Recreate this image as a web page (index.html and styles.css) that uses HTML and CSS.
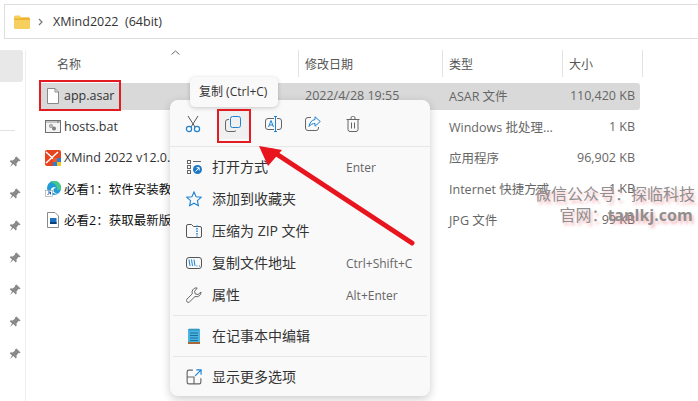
FILE: index.html
```html
<!DOCTYPE html>
<html lang="en">
<head>
    <meta charset="UTF-8">
    <title>XMind2022</title>
    <link rel="stylesheet" href="styles.css">
</head>
<body>
    <div class="window">
        <div class="address-bar">
            <svg class="folder-icon" width="16" height="14" viewBox="0 0 16 14">
                <path d="M0 2a1.500 1.500 0 0 1 1.500-1.500h4l2 2h7A1.500 1.500 0 0 1 16 4v8.500a1.500 1.500 0 0 1-1.500 1.500h-13A1.500 1.500 0 0 1 0 12.500z" fill="#f7cf5f"/>
                <path d="M0 3.500h6l2-1h6.500A1.500 1.500 0 0 1 16 4v1H0z" fill="#eeb32f"/>
            </svg>
            <svg class="crumb-arrow" width="5" height="8" viewBox="0 0 5 8"><path d="M1 1l3 3-3 3" fill="none" stroke="#777" stroke-width="1.200"/></svg>
            <span class="crumb">XMind2022 &nbsp;(64bit)</span>
        </div>

        <div class="main">
            <aside class="sidebar">
                <div class="side-selected"></div>
                <div class="side-divider"></div>
                <div class="pins">
                    <svg class="pin" viewBox="0 0 12 12"><path d="M7.500 0.500l4 4-1 .8-1-.2-2 2.400.2 2-1 1-2.300-2.500L1 11l2-3.500L.7 5.300l1-1 2 .2 2.400-2-.2-1z"/></svg>
                    <svg class="pin" viewBox="0 0 12 12"><path d="M7.500 0.500l4 4-1 .8-1-.2-2 2.400.2 2-1 1-2.300-2.500L1 11l2-3.500L.7 5.300l1-1 2 .2 2.400-2-.2-1z"/></svg>
                    <svg class="pin" viewBox="0 0 12 12"><path d="M7.500 0.500l4 4-1 .8-1-.2-2 2.400.2 2-1 1-2.300-2.500L1 11l2-3.500L.7 5.300l1-1 2 .2 2.400-2-.2-1z"/></svg>
                    <svg class="pin" viewBox="0 0 12 12"><path d="M7.500 0.500l4 4-1 .8-1-.2-2 2.400.2 2-1 1-2.300-2.500L1 11l2-3.500L.7 5.300l1-1 2 .2 2.400-2-.2-1z"/></svg>
                    <svg class="pin" viewBox="0 0 12 12"><path d="M7.500 0.500l4 4-1 .8-1-.2-2 2.400.2 2-1 1-2.300-2.500L1 11l2-3.500L.7 5.300l1-1 2 .2 2.400-2-.2-1z"/></svg>
                    <svg class="pin" viewBox="0 0 12 12"><path d="M7.500 0.500l4 4-1 .8-1-.2-2 2.400.2 2-1 1-2.300-2.500L1 11l2-3.500L.7 5.300l1-1 2 .2 2.400-2-.2-1z"/></svg>
                    <svg class="pin" viewBox="0 0 12 12"><path d="M7.500 0.500l4 4-1 .8-1-.2-2 2.400.2 2-1 1-2.300-2.500L1 11l2-3.500L.7 5.300l1-1 2 .2 2.400-2-.2-1z"/></svg>
                </div>
            </aside>

            <div class="files">
                <div class="file-head">
                    <div class="col col-name">名称<svg class="sort" width="9" height="5" viewBox="0 0 9 5"><path d="M.5 4.500l4-3.500 4 3.500" fill="none" stroke="#666"/></svg></div>
                    <div class="col col-date">修改日期</div>
                    <div class="col col-type">类型</div>
                    <div class="col col-size">大小</div>
                </div>

                <div class="file-row selected">
                    <div class="cell-name">
                        <svg class="file-icon" width="12" height="16" viewBox="0 0 12 16"><path d="M.5.500h7.500l3.500 3.500v11.500H.5z" fill="#fff" stroke="#8a8a8a"/><path d="M8 .5v3.500h3.500" fill="none" stroke="#8a8a8a"/></svg>
                        <span>app.asar</span>
                    </div>
                    <div class="cell-date">2022/4/28 19:55</div>
                    <div class="cell-type">ASAR 文件</div>
                    <div class="cell-size">110,420 KB</div>
                </div>
                <div class="file-row">
                    <div class="cell-name">
                        <svg class="file-icon" width="16" height="13" viewBox="0 0 16 13"><rect x=".5" y=".5" width="15" height="12" fill="#f4f4f4" stroke="#6f6f6f"/><rect x="1" y="1" width="14" height="2" fill="#c4c4c4"/><circle cx="6" cy="6" r="2" fill="#9a9a9a"/><circle cx="9" cy="8.500" r="2" fill="#7f7f7f"/><circle cx="6" cy="6" r=".7" fill="#eee"/><circle cx="13" cy="2" r=".7" fill="#555"/></svg>
                        <span>hosts.bat</span>
                    </div>
                    <div class="cell-date">2022/4/28 19:55</div>
                    <div class="cell-type">Windows 批处理...</div>
                    <div class="cell-size">1 KB</div>
                </div>
                <div class="file-row">
                    <div class="cell-name">
                        <svg class="file-icon" width="16" height="16" viewBox="0 0 16 16"><rect width="16" height="16" rx="2" fill="#e8431f"/><path d="M1 2l12 11M13 2L1 13" stroke="#fff" stroke-width="1.500"/><rect x="8" y="8" width="4" height="4" fill="#f05a28"/><rect x="12" y="8" width="4" height="4" fill="#2b7fd6"/><rect x="8" y="12" width="4" height="4" fill="#2b7fd6"/><rect x="12" y="12" width="4" height="4" fill="#f5c518"/></svg>
                        <span>XMind 2022 v12.0.0</span>
                    </div>
                    <div class="cell-date">2022/4/28 19:55</div>
                    <div class="cell-type">应用程序</div>
                    <div class="cell-size">96,902 KB</div>
                </div>
                <div class="file-row">
                    <div class="cell-name">
                        <svg class="file-icon" width="16" height="16" viewBox="0 0 16 16"><circle cx="9" cy="7" r="7" fill="#1f9bd8"/><path d="M5 1a7 7 0 0 1 11 6v2h-4c1-3-2-7-7-8z" fill="#46c78c"/><path d="M6 8c1-2 4-2.500 5.500-1-2-.3-3.500 1-3 3 .4 1.700 2.500 2.500 4.500 2-2 1.500-7 .5-7-4z" fill="#fff"/><rect x=".5" y="9.500" width="7" height="6" fill="#fff" stroke="#999" stroke-width=".6"/><path d="M2.500 14l3-3M3 11h2.500v2.500" fill="none" stroke="#1a5fb4"/></svg>
                        <span class="dark">必看1：软件安装教程</span>
                    </div>
                    <div class="cell-date">2022/4/28 19:55</div>
                    <div class="cell-type">Internet 快捷方式</div>
                    <div class="cell-size">1 KB</div>
                </div>
                <div class="file-row">
                    <div class="cell-name">
                        <svg class="file-icon" width="12" height="16" viewBox="0 0 12 16"><path d="M.5.500h7.500l3.500 3.500v11.500H.5z" fill="#fff" stroke="#8a8a8a"/><rect x="3" y="6" width="6.500" height="6" fill="#1a6fc0"/><rect x="3" y="10" width="6.500" height="2" fill="#0d3f78"/></svg>
                        <span class="dark">必看2：获取最新版本</span>
                    </div>
                    <div class="cell-date">2022/4/28 19:55</div>
                    <div class="cell-type">JPG 文件</div>
                    <div class="cell-size">99 KB</div>
                </div>
            </div>
        </div>

        <div class="name-mark"></div>

        <div class="context-menu">
            <div class="toolbar">
                <div class="tool">
                    <svg width="16" height="18" viewBox="0 0 16 18" fill="none"><path d="M3 1l7 11M13 1L6 12" stroke="#555" stroke-width="1"/><circle cx="4" cy="14" r="2.600" stroke="#1e82d2" stroke-width="1.200"/><circle cx="12" cy="14" r="2.600" stroke="#1e82d2" stroke-width="1.200"/></svg>
                </div>
                <div class="tool active">
                    <svg width="16" height="16" viewBox="0 0 16 16" fill="none"><rect x="5.500" y=".5" width="10" height="11" rx="2" stroke="#1e82d2"/><path d="M4 3.500H3a2.500 2.500 0 0 0-2.500 2.500v7A2.500 2.500 0 0 0 3 15.500h6a2.500 2.500 0 0 0 2-1" stroke="#666"/></svg>
                </div>
                <div class="tool">
                    <svg width="17" height="16" viewBox="0 0 17 16" fill="none"><rect x=".5" y="2.500" width="16" height="11" rx="2.500" stroke="#666"/><rect x="9" y="1" width="3" height="14" fill="#f9f9f9"/><path d="M10.500 .5v15M9 .5h3M9 15.500h3" stroke="#1e82d2"/><path d="M3.500 11l2.500-6.500L8.500 11M4.300 9h3.500" stroke="#1e82d2"/></svg>
                </div>
                <div class="tool">
                    <svg width="16" height="15" viewBox="0 0 16 15" fill="none"><path d="M6 1.500H3A2.500 2.500 0 0 0 .5 4v8A2.500 2.500 0 0 0 3 14.500h8a2.500 2.500 0 0 0 2.500-2.500v-1" stroke="#666"/><path d="M10 .8l5.300 4.700L10 10.200V7.500C7.500 7.500 5.500 8.500 4 10.500 4.500 7 6.500 4 10 3.500z" stroke="#1e82d2"/></svg>
                </div>
                <div class="tool">
                    <svg width="14" height="16" viewBox="0 0 14 16" fill="none" stroke="#666"><path d="M.5 3.500h13M5 3.500V2a1.500 1.500 0 0 1 1.500-1.500h1A1.500 1.500 0 0 1 9 2v1.500M2 3.500v10A2 2 0 0 0 4 15.500h6a2 2 0 0 0 2-2v-10M5.500 6.500v6M8.500 6.500v6"/></svg>
                </div>
            </div>

            <div class="menu-list">
                <div class="menu-item">
                    <svg class="menu-icon" width="16" height="16" viewBox="0 0 16 16" fill="none"><rect x="1.500" y="1.500" width="3" height="3" stroke="#666"/><rect x="1.500" y="6.500" width="3" height="3" stroke="#666"/><rect x="1.500" y="11.500" width="3" height="3" stroke="#666"/><path d="M7 2.500h8" stroke="#666"/><circle cx="11.500" cy="10.500" r="4.500" fill="#1e78c8"/><path d="M9.500 12.500l3.500-3.500M10.500 8.700h2.700v2.700" stroke="#fff"/></svg>
                    <span class="menu-label">打开方式</span>
                    <span class="menu-key">Enter</span>
                </div>
                <div class="menu-item">
                    <svg class="menu-icon" width="16" height="16" viewBox="0 0 16 16" fill="none"><path d="M8 1l2.100 4.700 5.100.6-3.800 3.400 1 5L8 12.200l-4.400 2.500 1-5L.8 6.300l5.100-.6z" stroke="#1e82d2" stroke-width="1.100"/></svg>
                    <span class="menu-label">添加到收藏夹</span>
                </div>
                <div class="menu-item">
                    <svg class="menu-icon" width="16" height="14" viewBox="0 0 16 14" fill="none"><path d="M.5 2A1.500 1.500 0 0 1 2 .5h3.500l2 2H14A1.500 1.500 0 0 1 15.500 4v8a1.500 1.500 0 0 1-1.500 1.500H2A1.500 1.500 0 0 1 .5 12z" stroke="#555"/><path d="M11 1.500v11" stroke="#1e82d2" stroke-width="1.500" stroke-dasharray="1.500 1"/></svg>
                    <span class="menu-label">压缩为 ZIP 文件</span>
                </div>
                <div class="menu-item">
                    <svg class="menu-icon" width="16" height="12" viewBox="0 0 16 12" fill="none"><rect x=".5" y=".5" width="15" height="11" rx="2.500" stroke="#555"/><path d="M3 2.500l1 6.500M5.500 2.500l1 6.500M8 2.500l1 6.500" stroke="#1e82d2"/><path d="M10.500 9h1M13 9h1" stroke="#1e82d2"/></svg>
                    <span class="menu-label">复制文件地址</span>
                    <span class="menu-key">Ctrl+Shift+C</span>
                </div>
                <div class="menu-item">
                    <svg class="menu-icon" width="16" height="16" viewBox="0 0 16 16" fill="none"><path d="M10 .8a4.500 4.500 0 0 0-3.700 6L.9 12.200a1.800 1.800 0 0 0 2.700 2.600l5.400-5.300A4.500 4.500 0 0 0 15 5l-3 2.500-2.800-.6-.6-2.600L11.200 1A4.500 4.500 0 0 0 10 .8z" stroke="#666"/></svg>
                    <span class="menu-label">属性</span>
                    <span class="menu-key">Alt+Enter</span>
                </div>
            </div>
            <div class="menu-sep"></div>
            <div class="menu-item">
                <svg class="menu-icon" width="16" height="16" viewBox="0 0 16 16"><rect x="2" y="1" width="12" height="14" fill="#4ab3e0"/><rect x="2" y="14" width="12" height="2" fill="#a8673a"/><path d="M4 0.500v2M6 .5v2M8 .5v2M10 .5v2M12 .5v2" stroke="#1d7fa8"/><path d="M4 5h8M4 7.500h8M4 10h8M4 12.500h8" stroke="#17709c"/></svg>
                <span class="menu-label">在记事本中编辑</span>
            </div>
            <div class="menu-sep"></div>
            <div class="menu-item">
                <svg class="menu-icon" width="16" height="16" viewBox="0 0 14 14" fill="none"><path d="M6 1H2.500A1.500 1.500 0 0 0 1 2.500v9A1.500 1.500 0 0 0 2.500 13h9a1.500 1.500 0 0 0 1.500-1.500V8M1 7h6v6" stroke="#666"/><path d="M8 6l5-5M9 .8h4.200V5" stroke="#1e82d2"/></svg>
                <span class="menu-label">显示更多选项</span>
            </div>
        </div>

        <div class="tooltip">复制 (Ctrl+C)</div>
        <div class="mark-box"></div>

        <svg class="arrow" width="698" height="401" viewBox="0 0 698 401">
            <path d="M412 243L272 151" stroke="#e8141e" stroke-width="5" stroke-linecap="round"/>
            <path d="M259 146L282 150L268 166z" fill="#e8141e"/>
        </svg>

        <div class="watermark">
            <div>微信公众号：探临科技</div>
            <div class="watermark-site">官网：<b>tanlkj.com</b></div>
        </div>
    </div>
</body>
</html>
```

FILE: styles.css
```css
body {
    margin: 0;
    background: white;
    font-family: "Open Sans", "Noto Sans CJK SC", sans-serif;
    font-size: 12.5px;
    color: #555;
}

.window {
    position: relative;
    width: 698px;
    height: 401px;
    overflow: hidden;
    background: white;
}

.address-bar {
    display: flex;
    align-items: center;
    height: 33px;
    margin: 4px 0 0 4px;
    padding-left: 9px;
    border: 1px solid #dedede;
    border-right: none;
}

.crumb-arrow {
    margin: 0 10px 0 8px;
}

.crumb {
    font-size: 12.5px;
    color: #333;
}

.main {
    display: flex;
    height: 351px;
    margin-top: 11px;
}

.sidebar {
    width: 25px;
    flex-shrink: 0;
    border-right: 1px solid #eee;
}

.side-selected {
    width: 23px;
    height: 32px;
    background: #e8e8e8;
    border-radius: 0 3px 3px 0;
}

.side-divider {
    width: 15px;
    height: 1px;
    margin-top: 48px;
    background: #e2e2e2;
}

.pins {
    display: flex;
    flex-direction: column;
    gap: 20px;
    margin: 25px 0 0 9px;
}

.pin {
    width: 12px;
    height: 12px;
    fill: #8a8a8a;
}

.files {
    flex: 1;
    padding-left: 14px;
}

.file-head {
    display: flex;
    height: 27px;
    margin-bottom: 6px;
}

.col {
    position: relative;
    display: flex;
    align-items: center;
    padding-left: 6px;
    box-sizing: border-box;
    border-right: 1px solid #e2e2e2;
    color: #555;
    font-size: 12px;
}

.col-name {
    width: 259px;
    padding-left: 17px;
}

.col-date {
    width: 144px;
}

.col-type {
    width: 120px;
}

.col-size {
    width: 80px;
}

.sort {
    position: absolute;
    left: 131px;
    top: 0;
}

.file-row {
    display: flex;
    align-items: center;
    width: 600px;
    height: 27px;
    box-sizing: border-box;
    padding-bottom: 2px;
    margin-bottom: 4px;
    color: #666;
}

.file-row.selected {
    background: #d9d9d9;
    border-radius: 0 3px 3px 0;
}

.cell-name {
    display: flex;
    align-items: center;
    width: 259px;
    flex-shrink: 0;
    color: #333;
    white-space: nowrap;
}

.file-icon {
    width: 16px;
    margin: 0 3px 0 5px;
    flex-shrink: 0;
}

.dark {
    color: #111;
}

.cell-date {
    width: 144px;
    flex-shrink: 0;
    padding-left: 6px;
    box-sizing: border-box;
}

.cell-type {
    width: 120px;
    flex-shrink: 0;
    padding-left: 6px;
    box-sizing: border-box;
    white-space: nowrap;
}

.cell-size {
    flex: 1;
    padding-right: 5px;
    text-align: right;
    white-space: nowrap;
}

/* red box round the file name */
.name-mark {
    position: absolute;
    left: 39px;
    top: 80px;
    width: 78px;
    height: 27px;
    border: 2px solid #e31b23;
}

.context-menu {
    position: absolute;
    left: 170px;
    top: 100px;
    width: 260px;
    height: 296px;
    background: #f9f9f9;
    border-radius: 8px;
    box-shadow: 0 3px 10px rgba(0, 0, 0, 0.2);
    color: #333;
}

.toolbar {
    display: flex;
    gap: 8px;
    height: 47px;
    box-sizing: border-box;
    padding: 8px 0 0 7px;
    border-bottom: 1px solid #e6e6e6;
}

.tool {
    display: flex;
    align-items: center;
    justify-content: center;
    width: 32px;
    height: 31px;
    border-radius: 4px;
}

.tool.active {
    background: #f0f0f0;
}

.menu-list {
    padding-top: 4px;
}

.menu-item {
    display: flex;
    align-items: center;
    height: 32px;
}

.menu-icon {
    width: 16px;
    margin: 0 10px 0 16px;
    flex-shrink: 0;
}

.menu-label {
    width: 134px;
    padding-bottom: 2px;
    font-size: 14px;
}

.menu-key {
    font-size: 12px;
    color: #666;
}

.menu-sep {
    height: 1px;
    margin: 4px 3px;
    background: #e6e6e6;
}

.tooltip {
    position: absolute;
    left: 190px;
    top: 77px;
    width: 88px;
    height: 30px;
    box-sizing: border-box;
    padding-left: 9px;
    line-height: 30px;
    font-size: 12px;
    color: #333;
    background: #f9f9f9;
    border-radius: 5px;
    box-shadow: 0 1px 4px rgba(0, 0, 0, 0.2);
    white-space: nowrap;
}

.mark-box {
    position: absolute;
    left: 217px;
    top: 109px;
    width: 30px;
    height: 30px;
    border: 2px solid #e31b23;
}

.arrow {
    position: absolute;
    left: 0;
    top: 0;
}

.watermark {
    position: absolute;
    left: 530px;
    top: 184px;
    width: 170px;
    text-align: center;
    font-size: 16px;
    line-height: 21px;
    color: #8f8f8f;
    text-shadow: 2px 3px 3px rgba(240, 120, 130, 0.5);
    white-space: nowrap;
}

.watermark-site {
    padding-left: 22px;
}

.watermark b {
    font-weight: bold;
}
```
